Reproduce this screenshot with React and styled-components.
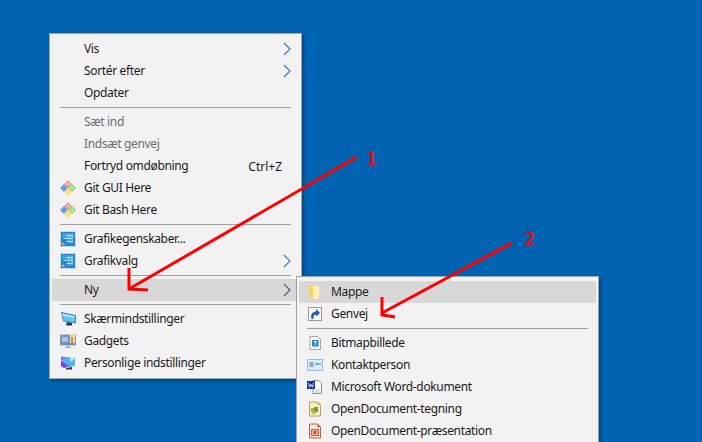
import React from "react";
import styled, { createGlobalStyle } from "styled-components";

const Global = createGlobalStyle`
  html, body { margin: 0; padding: 0; height: 100%; overflow: hidden; }
  #root { height: 100%; }
`;

const Desktop = styled.div`
  position: relative;
  width: 702px;
  height: 442px;
  overflow: hidden;
  background: #0063b1;
  font-family: "Noto Sans", "Open Sans", sans-serif;
  font-size: 12px;
  letter-spacing: -0.34px;
  color: #1a1a1a;
`;

const Menu = styled.div`
  position: absolute;
  left: ${(p) => p.$left}px;
  top: ${(p) => p.$top}px;
  width: ${(p) => p.$width}px;
  box-sizing: border-box;
  display: flex;
  flex-direction: column;
  padding: ${(p) => p.$padTop}px 2px 4px;
  background: #f2f2f2;
  border: 1px solid #a3a3a3;
  box-shadow: 2px 2px 3px rgba(0, 0, 0, 0.28);
`;

const Row = styled.div`
  display: flex;
  align-items: center;
  flex: none;
  height: 22px;
  padding-left: 8px;
  background: ${(p) => (p.$active ? "#d8d8d8" : "transparent")};
  color: ${(p) => (p.$disabled ? "#6d6d6d" : "#1a1a1a")};
`;

const IconSlot = styled.span`
  flex: none;
  width: 16px;
  height: 16px;
  margin-right: 8px;
  display: flex;
  svg { display: block; }
`;

const Label = styled.span`
  flex: 1;
  white-space: nowrap;
  line-height: 22px;
`;

const Shortcut = styled.span`
  margin-right: 17px;
  white-space: nowrap;
  letter-spacing: 0;
`;

const Chevron = styled.svg`
  flex: none;
  width: 8px;
  height: 14px;
  margin-right: 8px;
`;

const Separator = styled.div`
  flex: none;
  height: 1px;
  margin: ${(p) => p.$above}px 8px ${(p) => p.$below}px;
  background: #a0a0a0;
`;

const Overlay = styled.svg`
  position: absolute;
  left: 0;
  top: 0;
  width: 702px;
  height: 442px;
  pointer-events: none;
`;

const Number = styled.span`
  position: absolute;
  left: ${(p) => p.$left}px;
  top: ${(p) => p.$top}px;
  font-family: "DejaVu Sans Mono", monospace;
  font-size: 18px;
  line-height: 18px;
  letter-spacing: 0;
  color: #ff0000;
  -webkit-text-stroke: 0.5px #ff0000;
`;

const More = ({ dark }) => (
  <Chevron viewBox="0 0 8 14">
    <path d="M1 1l6 6-6 6" fill="none" stroke={dark ? "#4a5a78" : "#3f78b5"} strokeWidth="1.15" />
  </Chevron>
);

const Svg = ({ children }) => (
  <svg width="16" height="16" viewBox="0 0 16 16">{children}</svg>
);

const GitIcon = () => (
  <Svg>
    <path d="M8 0L12 4 8 8 4 4z" fill="#f29a9a" />
    <path d="M4 4L8 8 4 12 0 8z" fill="#5d9ff0" />
    <path d="M12 4L16 8 12 12 8 8z" fill="#93d968" />
    <path d="M8 8L12 12 8 16 4 12z" fill="#ffe07c" />
    <path d="M8 2.500L9.500 4 8 5.500 6.500 4z" fill="#fbd0d0" />
    <path d="M12 6.500L13.500 8 12 9.500 10.500 8z" fill="#e3f6d5" />
  </Svg>
);

const GraphicsIcon = () => (
  <Svg>
    <rect x=".5" y=".5" width="15" height="15" rx="1" fill="#1c86cf" stroke="#c4dcec" />
    <path d="M2 2h12v4L2 9z" fill="#3aa0e0" />
    <path d="M6 4.500h7M4 7.500h9M6 10.500h7M9 3.500v9M12 3.500v9" stroke="#cfeafa" strokeWidth=".8" fill="none" />
    <path d="M2 14v-3.500L5.500 14z" fill="#e7b64e" />
  </Svg>
);

const ScreenIcon = () => (
  <Svg>
    <path d="M1.500 1.500L15.500 4.500V12L3.500 10z" fill="#5cc4f5" stroke="#2c6f9c" strokeWidth=".8" />
    <path d="M2.500 2.800L14.500 5.200V7L2.500 5z" fill="#b8e8fb" />
    <path d="M7 11l5 1v2.500H6z" fill="#334" />
  </Svg>
);

const GadgetsIcon = () => (
  <Svg>
    <rect x=".5" y="2" width="15" height="10" fill="#6d95bd" stroke="#7f8f9f" strokeWidth=".8" />
    <rect x="10" y="1" width="5" height="9" fill="#f6d9a8" />
    <rect x="11" y="4" width="2" height="6" fill="#e88a2c" />
    <rect x="2" y="4" width="6" height="5" fill="#a9c6e2" />
    <path d="M7 12h2v2h2v1H5v-1h2z" fill="#9fb0c0" />
  </Svg>
);

const PersonalIcon = () => (
  <Svg>
    <path d="M1 1.500L15 3V11L4 13 1 11z" fill="#4fb7e8" />
    <path d="M1 6l8 5-5 2-3-2z" fill="#8a3fe0" />
    <path d="M1 1.500L7 3 1 5z" fill="#9a6be8" />
    <path d="M10 2.500l5 .5-4 4z" fill="#d8e6ef" />
    <path d="M6 13l6-1v2.500H6z" fill="#3a3a4a" />
  </Svg>
);

const FolderIcon = () => (
  <Svg>
    <path d="M2 1h5l5 2v12H5l-3-2z" fill="#fde79c" />
    <path d="M2 1h4v13.500L2 13z" fill="#f6d36b" />
    <path d="M7 3h5v12H7z" fill="#ffefb8" />
  </Svg>
);

const ShortcutIcon = () => (
  <Svg>
    <rect x="1.500" y="1.500" width="13" height="13" fill="#f8f8f8" stroke="#9a9a9a" />
    <path d="M4.500 13c-1-4.500 .5-7 4.500-7.500V3L13 7 9 10.500V8.500C7 8.500 6 10.500 6.500 13z" fill="#1d5fa8" />
  </Svg>
);

const BitmapIcon = () => (
  <Svg>
    <path d="M3 1.500h8l2.500 2.500v10.500H3z" fill="#fbfbfb" stroke="#a6a6a6" />
    <rect x="5" y="5" width="6.500" height="6.500" fill="#1a86d8" />
    <path d="M6.500 6.500h3.500M8.300 6.500v3.500" stroke="#fff" fill="none" />
  </Svg>
);

const ContactIcon = () => (
  <Svg>
    <rect x=".5" y="2.500" width="15" height="11" fill="#d6ecf8" stroke="#8fc2e2" />
    <rect x="2.500" y="5" width="4" height="5" fill="#9aa6ac" />
    <rect x="8" y="6" width="6" height="2" fill="#6fb2da" />
  </Svg>
);

const WordIcon = () => (
  <Svg>
    <path d="M6 1.500h5.500l3 3v10H6z" fill="#fafafa" stroke="#8e8e8e" />
    <path d="M8 11h5M8 13h5" stroke="#c6c6c6" fill="none" />
    <rect x="0" y="2" width="8" height="8" fill="#1a2ea0" />
    <path d="M1.500 3.800l1 4.500 1.500-3 1.500 3 1-4.500" stroke="#fff" fill="none" strokeWidth=".8" />
  </Svg>
);

const DrawIcon = () => (
  <Svg>
    <path d="M2.500 1h8l3 3v11h-11z" fill="#f4eccb" stroke="#b6a55e" />
    <path d="M10.500 1l3 3h-3z" fill="#c9a735" />
    <rect x="4" y="7" width="4" height="4" fill="#d9a02c" />
    <rect x="7" y="6" width="4" height="5" fill="#6f9a3a" />
    <rect x="5" y="10" width="4" height="3" fill="#a7c25d" />
  </Svg>
);

const SlidesIcon = () => (
  <Svg>
    <path d="M2.500 1h8l3 3v11h-11z" fill="#f4e6dc" stroke="#a86b47" />
    <path d="M10.500 1l3 3h-3z" fill="#b3471c" />
    <rect x="4.500" y="6.500" width="7" height="6" fill="#efb79a" stroke="#c8643a" />
    <rect x="6.500" y="8" width="3" height="3" fill="#c8502a" />
  </Svg>
);

const Item = ({ icon, label, shortcut, more, active, disabled, dark }) => (
  <Row $active={active} $disabled={disabled}>
    <IconSlot>{icon}</IconSlot>
    <Label>{label}</Label>
    {shortcut && <Shortcut>{shortcut}</Shortcut>}
    {more && <More dark={dark} />}
  </Row>
);

export default function App() {
  return (
    <Desktop>
      <Global />
      <Menu $left={49} $top={33} $width={253} $padTop={4}>
        <Item label="Vis" more />
        <Item label="Sortér efter" more />
        <Item label="Opdater" />
        <Separator $above={3} $below={3} />
        <Item label="Sæt ind" disabled />
        <Item label="Indsæt genvej" disabled />
        <Item label="Fortryd omdøbning" shortcut="Ctrl+Z" />
        <Item label="Git GUI Here" icon={<GitIcon />} />
        <Item label="Git Bash Here" icon={<GitIcon />} />
        <Separator $above={3} $below={3} />
        <Item label="Grafikegenskaber..." icon={<GraphicsIcon />} />
        <Item label="Grafikvalg" icon={<GraphicsIcon />} more />
        <Separator $above={3} $below={3} />
        <Item label="Ny" active more dark />
        <Separator $above={3} $below={3} />
        <Item label="Skærmindstillinger" icon={<ScreenIcon />} />
        <Item label="Gadgets" icon={<GadgetsIcon />} />
        <Item label="Personlige indstillinger" icon={<PersonalIcon />} />
      </Menu>
      <Menu $left={296} $top={276} $width={303} $padTop={4}>
        <Item label="Mappe" active icon={<FolderIcon />} />
        <Item label="Genvej" icon={<ShortcutIcon />} />
        <Separator $above={3} $below={3} />
        <Item label="Bitmapbillede" icon={<BitmapIcon />} />
        <Item label="Kontaktperson" icon={<ContactIcon />} />
        <Item label="Microsoft Word-dokument" icon={<WordIcon />} />
        <Item label="OpenDocument-tegning" icon={<DrawIcon />} />
        <Item label="OpenDocument-præsentation" icon={<SlidesIcon />} />
      </Menu>
      <Overlay viewBox="0 0 702 442">
        <g fill="none" stroke="#ff0000" strokeWidth="3">
          <path d="M357 157L129 289M129 268V289L148 290" />
          <path d="M512 243L382 313M382 297V315L395 317" />
        </g>
      </Overlay>
      <Number $left={366} $top={150}>1</Number>
      <Number $left={524} $top={230}>2</Number>
    </Desktop>
  );
}
